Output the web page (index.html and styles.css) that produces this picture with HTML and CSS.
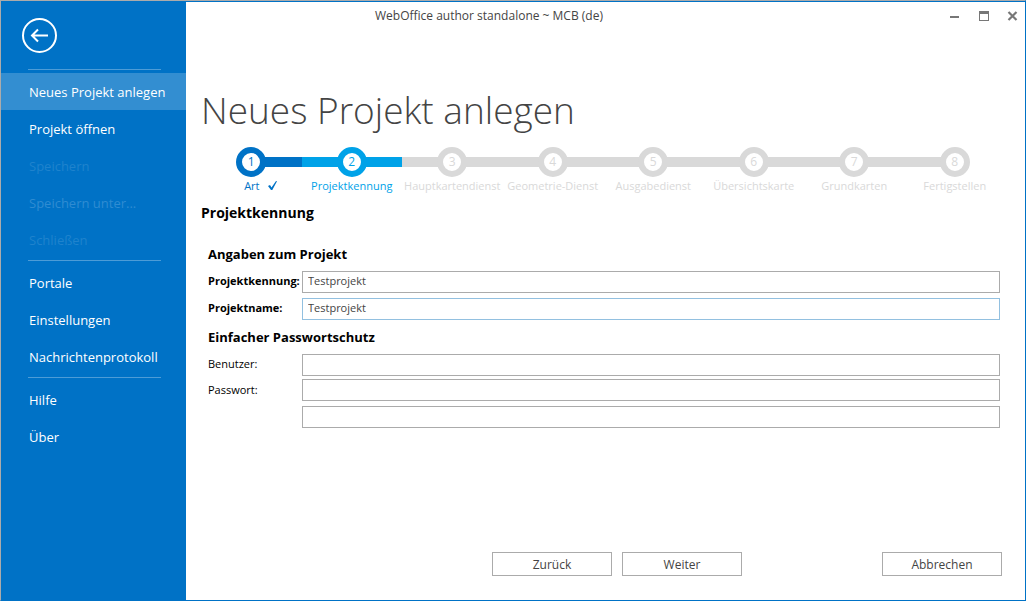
FILE: index.html
```html
<!DOCTYPE html>
<html lang="de">
<head>
<meta charset="utf-8">
<title>WebOffice author standalone ~ MCB (de)</title>
<link rel="stylesheet" href="styles.css">
</head>
<body>
<div class="window">
  <nav class="sidebar" aria-label="Menü">
    <button class="back" type="button" aria-label="Zurück zum Projekt">
      <svg viewBox="0 0 35 35" width="35" height="35" fill="none" stroke="currentColor" stroke-width="2">
        <circle cx="17.5" cy="17.5" r="16.5"/>
        <path d="M26 17.5H10M16 11.5l-6 6 6 6"/>
      </svg>
    </button>
    <hr class="rule">
    <button class="item item-active" type="button">Neues Projekt anlegen</button>
    <button class="item" type="button">Projekt öffnen</button>
    <button class="item item-faint" type="button" disabled>Speichern</button>
    <button class="item item-dim" type="button" disabled>Speichern unter...</button>
    <button class="item item-faint" type="button" disabled>Schließen</button>
    <hr class="rule">
    <button class="item" type="button">Portale</button>
    <button class="item" type="button">Einstellungen</button>
    <button class="item" type="button">Nachrichtenprotokoll</button>
    <hr class="rule">
    <button class="item" type="button">Hilfe</button>
    <button class="item" type="button">Über</button>
  </nav>
  <div class="main">
    <header class="titlebar">
      <div class="caption">WebOffice author standalone ~ MCB (de)</div>
      <div class="controls">
        <button type="button" aria-label="Minimieren"><svg viewBox="0 0 11 11" width="11" height="11"><path fill="currentColor" d="M1 5h9v2H1z"/></svg></button>
        <button type="button" aria-label="Maximieren"><svg viewBox="0 0 11 11" width="11" height="11"><path fill="currentColor" fill-rule="evenodd" d="M1 0h10v10H1zM2 3v6h8V3z"/></svg></button>
        <button type="button" aria-label="Schließen"><svg viewBox="0 0 11 11" width="11" height="11"><path stroke="currentColor" stroke-width="2.200" d="M1.500 1l8 8M9.500 1l-8 8"/></svg></button>
      </div>
    </header>
    <main class="page">
      <h1 class="title">Neues Projekt anlegen</h1>
      <ol class="steps">
        <li class="step step-done"><span class="dot">1</span><span class="name">Art <svg class="tick" viewBox="0 0 11 11" width="11" height="11"><path fill="currentColor" d="M1 6l2-1 1.500 2.500L9 1l1 .3L5.300 10H4z"/></svg></span></li>
        <li class="step step-current" aria-current="step"><span class="dot">2</span><span class="name">Projektkennung</span></li>
        <li class="step"><span class="dot">3</span><span class="name">Hauptkartendienst</span></li>
        <li class="step"><span class="dot">4</span><span class="name">Geometrie-Dienst</span></li>
        <li class="step"><span class="dot">5</span><span class="name">Ausgabedienst</span></li>
        <li class="step"><span class="dot">6</span><span class="name">Übersichtskarte</span></li>
        <li class="step"><span class="dot">7</span><span class="name">Grundkarten</span></li>
        <li class="step"><span class="dot">8</span><span class="name">Fertigstellen</span></li>
      </ol>
      <h2 class="section">Projektkennung</h2>
      <form class="form">
        <h3 class="group">Angaben zum Projekt</h3>
        <div class="row row-required"><label for="key">Projektkennung:</label><input id="key" type="text" value="Testprojekt"></div>
        <div class="row row-required"><label for="name">Projektname:</label><input id="name" class="focused" type="text" value="Testprojekt"></div>
        <h3 class="group">Einfacher Passwortschutz</h3>
        <div class="row row-tight"><label for="user">Benutzer:</label><input id="user" type="text"></div>
        <div class="row"><label for="password">Passwort:</label><input id="password" type="password"></div>
        <div class="row"><span></span><input type="password" aria-label="Passwort wiederholen"></div>
      </form>
      <footer class="actions">
        <button class="button" type="button">Zurück</button>
        <button class="button" type="button">Weiter</button>
        <button class="button button-cancel" type="button">Abbrechen</button>
      </footer>
    </main>
  </div>
</div>
</body>
</html>
```
FILE: styles.css
```css
* { box-sizing: border-box; }

body {
  margin: 0;
  background: #fff;
  color: #000;
  font-family: "Open Sans", "Noto Sans", sans-serif;
  font-size: 12px;
}

button, input { font: inherit; border-radius: 0; }
h1, h2, h3 { margin: 0; }

.window {
  display: flex;
  min-height: 100vh;
  border: 1px solid #0072c6;
  border-top-color: #ababab;
  border-left-color: #ababab;
}

.sidebar {
  display: flex;
  flex-direction: column;
  flex: none;
  width: 185px;
  padding-top: 17px;
  background: #0072c6;
  color: #fff;
}

.back {
  width: 35px;
  height: 35px;
  margin: 0 0 14px 21px;
  padding: 0;
  border: 0;
  background: none;
  color: #fff;
}

.back svg { display: block; }

.rule {
  flex: none;
  width: 133px;
  height: 1px;
  margin: 2px 0 3px 27px;
  border: 0;
  background: #4d9cd7;
}

.item {
  height: 37px;
  padding: 0 0 0 28px;
  border: 0;
  background: none;
  color: #fff;
  font-size: 13px;
  text-align: left;
}

.item-active { background: #338ed1; }
.item-dim { color: #2f8cd2; }
.item-faint { color: #1f83cd; }

.main {
  display: flex;
  flex-direction: column;
  flex: 1;
  min-width: 0;
  border-top: 1px solid #0072c6;
}

.titlebar {
  display: flex;
  height: 28px;
  padding-right: 7px;
  color: #444;
}

.caption {
  flex: 1;
  padding-left: 189px;
  line-height: 28px;
}

.controls {
  display: flex;
  align-items: center;
  gap: 18px;
  color: #777;
}

.controls button {
  padding: 0;
  border: 0;
  background: none;
  color: inherit;
}

.controls svg { display: block; }

.page {
  display: flex;
  flex-direction: column;
  flex: 1;
  padding: 54px 20px 24px 15px;
}

.title {
  color: #444;
  font-size: 37px;
  font-weight: 300;
  line-height: 52px;
}

.steps {
  display: grid;
  grid-template-columns: repeat(8, minmax(0, 1fr));
  margin: 11px 0 0;
  padding: 0;
  list-style: none;
}

.step {
  --left: #d9d9d9;
  --right: #d9d9d9;
  display: flex;
  flex-direction: column;
  align-items: center;
  color: #d9d9d9;
  background: linear-gradient(to right, var(--left) 50%, var(--right) 50%) 0 10px / 100% 10px repeat-x;
}

.step-done { color: #0072c6; --right: #0072c6; }
.step-current { color: #00a2e8; --left: #00a2e8; --right: #00a2e8; }
.step:first-child { --left: #fff; }
.step:last-child { --right: #fff; }

.dot {
  width: 30px;
  height: 30px;
  border: 6px solid;
  border-radius: 50%;
  background: #fff;
  line-height: 18px;
  text-align: center;
}

.name {
  font-size: 11px;
  line-height: 18px;
  white-space: nowrap;
}

.step-done .name { padding-left: 20px; }
.tick { margin-left: 5px; vertical-align: -1px; }

.section {
  margin-top: 8px;
  font-size: 14px;
  line-height: 20px;
}

.form { padding: 0 5px 0 7px; }

.group {
  padding: 21px 0 7px;
  font-size: 13px;
  line-height: 20px;
}

.row {
  display: grid;
  grid-template-columns: 94px 1fr;
  height: 27px;
  font-size: 11px;
  line-height: 22px;
}

.row-required label { font-weight: 700; }
.row-required label, .row-tight label { line-height: 20px; }
.row-tight { height: 25px; }
.row + .group { padding-top: 2px; }

.row input {
  width: 100%;
  height: 22px;
  padding: 0 5px 2px;
  border: 1px solid #ababab;
  outline: 0;
  background: #fff;
  color: #444;
}

.row .focused { border-color: #92c0e0; }

.actions {
  display: flex;
  gap: 10px;
  margin-top: auto;
  padding: 0 3px 0 291px;
}

.button {
  width: 120px;
  height: 24px;
  padding: 0;
  border: 1px solid #ababab;
  background: #fff;
  color: #444;
}

.button-cancel { margin-left: auto; }
```
